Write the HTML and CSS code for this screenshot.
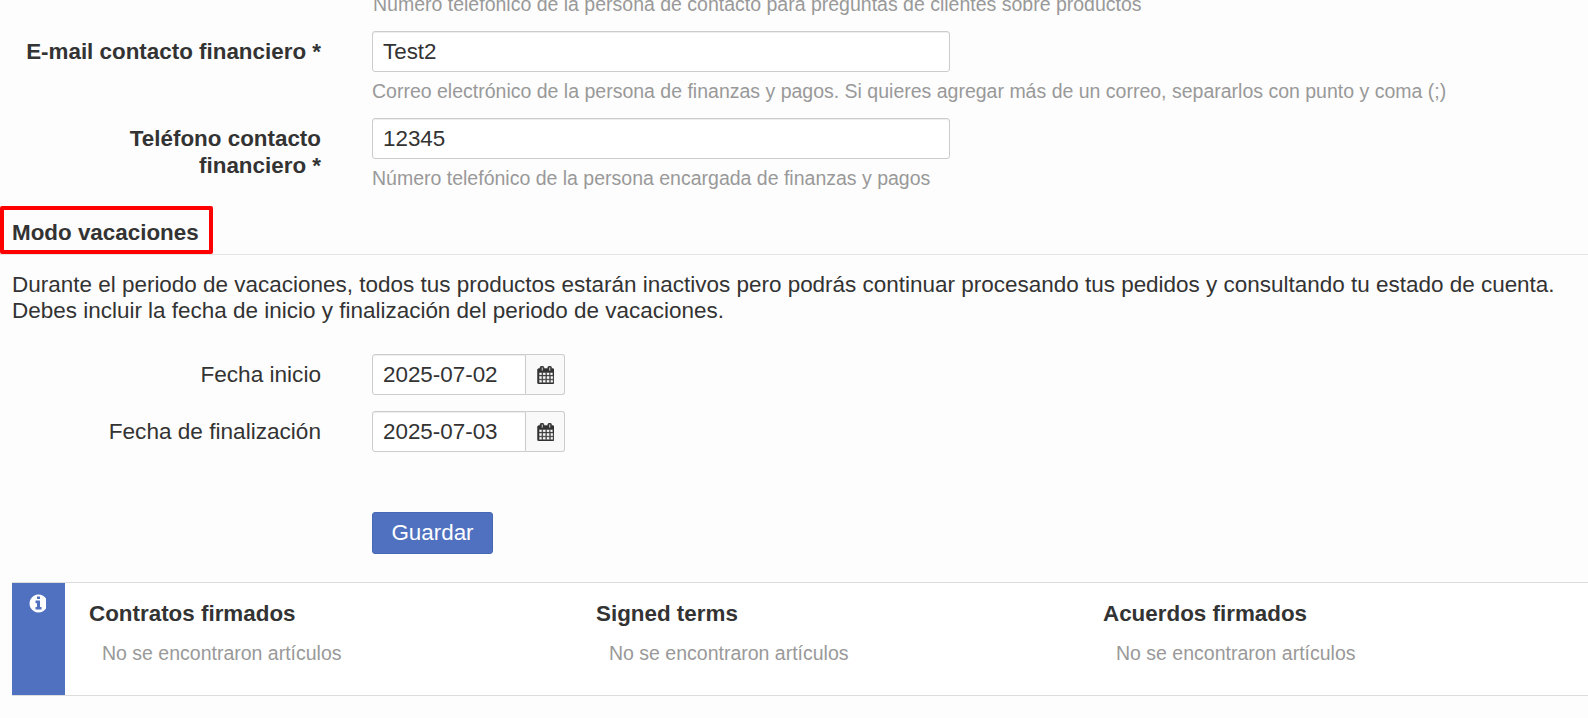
FILE: index.html
```html
<!DOCTYPE html>
<html lang="es">
  <head>
    <meta charset="UTF-8" />
    <title>Modo vacaciones</title>
    <link rel="stylesheet" href="styles.css">
  </head>
  <body>
    <form class="page">
      <p class="hint hint-clipped">Número telefónico de la persona de contacto para preguntas de clientes sobre productos</p>

      <div class="form-row">
        <label class="label-strong" for="email">E-mail contacto financiero *</label>
        <div class="field">
          <input class="text-input" type="text" id="email" value="Test2" />
          <p class="hint">Correo electrónico de la persona de finanzas y pagos. Si quieres agregar más de un correo, separarlos con punto y coma (;)</p>
        </div>
      </div>

      <div class="form-row">
        <label class="label-strong" for="phone">Teléfono contacto financiero *</label>
        <div class="field">
          <input class="text-input" type="text" id="phone" value="12345" />
          <p class="hint">Número telefónico de la persona encargada de finanzas y pagos</p>
        </div>
      </div>

      <div class="section-head">
        <h4 class="section-title">Modo vacaciones</h4>
      </div>
      <p class="section-text">Durante el periodo de vacaciones, todos tus productos estarán inactivos pero podrás continuar procesando tus pedidos y consultando tu estado de cuenta. Debes incluir la fecha de inicio y finalización del periodo de vacaciones.</p>

      <div class="form-row date-row">
        <label for="start">Fecha inicio</label>
        <div class="date-group">
          <input class="date-input" type="text" id="start" value="2025-07-02" />
          <span class="addon">
            <svg class="icon-calendar" viewBox="0 0 1664 1792"><path d="M192 1664h288v-288h-288v288zm352 0h320v-288h-320v288zm-352-352h288v-320h-288v320zm352 0h320v-320h-320v320zm-352-384h288v-288h-288v288zm736 736h320v-288h-320v288zm-384-736h320v-288h-320v288zm768 736h288v-288h-288v288zm-384-352h320v-320h-320v320zm-352-864v-288q0-13-9.5-22.5t-22.5-9.5h-64q-13 0-22.5 9.5t-9.5 22.5v288q0 13 9.5 22.5t22.5 9.5h64q13 0 22.5-9.5t9.5-22.5zm736 864h288v-320h-288v320zm-384-384h320v-288h-320v288zm352 0h288v-288h-288v288zm32-480v-288q0-13-9.5-22.5t-22.5-9.5h-64q-13 0-22.5 9.5t-9.5 22.5v288q0 13 9.5 22.5t22.5 9.5h64q13 0 22.5-9.5t9.5-22.5zm384-64v1280q0 52-38 90t-90 38h-1408q-52 0-90-38t-38-90v-1280q0-52 38-90t90-38h128v-96q0-66 47-113t113-47h64q66 0 113 47t47 113v96h384v-96q0-66 47-113t113-47h64q66 0 113 47t47 113v96h128q52 0 90 38t38 90z"/></svg>
          </span>
        </div>
      </div>

      <div class="form-row date-row">
        <label for="end">Fecha de finalización</label>
        <div class="date-group">
          <input class="date-input" type="text" id="end" value="2025-07-03" />
          <span class="addon">
            <svg class="icon-calendar" viewBox="0 0 1664 1792"><path d="M192 1664h288v-288h-288v288zm352 0h320v-288h-320v288zm-352-352h288v-320h-288v320zm352 0h320v-320h-320v320zm-352-384h288v-288h-288v288zm736 736h320v-288h-320v288zm-384-736h320v-288h-320v288zm768 736h288v-288h-288v288zm-384-352h320v-320h-320v320zm-352-864v-288q0-13-9.5-22.5t-22.5-9.5h-64q-13 0-22.5 9.5t-9.5 22.5v288q0 13 9.5 22.5t22.5 9.5h64q13 0 22.5-9.5t9.5-22.5zm736 864h288v-320h-288v320zm-384-384h320v-288h-320v288zm352 0h288v-288h-288v288zm32-480v-288q0-13-9.5-22.5t-22.5-9.5h-64q-13 0-22.5 9.5t-9.5 22.5v288q0 13 9.5 22.5t22.5 9.5h64q13 0 22.5-9.5t9.5-22.5zm384-64v1280q0 52-38 90t-90 38h-1408q-52 0-90-38t-38-90v-1280q0-52 38-90t90-38h128v-96q0-66 47-113t113-47h64q66 0 113 47t47 113v96h384v-96q0-66 47-113t113-47h64q66 0 113 47t47 113v96h128q52 0 90 38t38 90z"/></svg>
          </span>
        </div>
      </div>

      <div class="form-row submit-row">
        <span></span>
        <button class="btn-save" type="button">Guardar</button>
      </div>

      <section class="info-box">
        <div class="info-icon">
          <svg class="icon-info" viewBox="0 0 1536 1792"><path d="M1152 1376v-160q0-14-9-23t-23-9h-96v-512q0-14-9-23t-23-9h-320q-14 0-23 9t-9 23v160q0 14 9 23t23 9h96v320h-96q-14 0-23 9t-9 23v160q0 14 9 23t23 9h448q14 0 23-9t9-23zm-128-896v-160q0-14-9-23t-23-9h-192q-14 0-23 9t-9 23v160q0 14 9 23t23 9h192q14 0 23-9t9-23zm640 416q0 209-103 385.5t-279.5 279.5-385.5 103-385.5-103-279.5-279.5-103-385.5 103-385.5 279.5-279.5 385.5-103 385.5 103 279.5 279.5 103 385.5z"/></svg>
        </div>
        <div class="info-cols">
          <div class="info-col">
            <h5>Contratos firmados</h5>
            <p>No se encontraron artículos</p>
          </div>
          <div class="info-col">
            <h5>Signed terms</h5>
            <p>No se encontraron artículos</p>
          </div>
          <div class="info-col">
            <h5>Acuerdos firmados</h5>
            <p>No se encontraron artículos</p>
          </div>
        </div>
      </section>
    </form>
  </body>
</html>
```

FILE: styles.css
```css
html,
body {
  height: 100%;
}
body {
  margin: 0;
  overflow: hidden;
  background: #fdfdfd;
  color: #333;
  font-family: "Liberation Sans", Arial, sans-serif;
  font-size: 22.4px;
  line-height: 26px;
}
.page {
  margin-top: -9px;
}
p {
  margin: 0;
}
.hint {
  color: #999;
  font-size: 19.5px;
  line-height: 26px;
  margin-top: 6px;
}
.hint-clipped {
  margin: 0 0 14px 373px;
}
.form-row {
  display: grid;
  grid-template-columns: 321px 1fr;
  column-gap: 51px;
  margin-bottom: 14px;
}
.form-row label {
  text-align: right;
  padding: 7px 0 0 22px;
  line-height: 27px;
}
.label-strong {
  font-weight: 700;
}
.text-input,
.date-input {
  box-sizing: border-box;
  height: 41px;
  padding: 0 10px;
  border: 1px solid #ccc;
  border-radius: 3px;
  background: #fff;
  box-shadow: inset 0 1px 1px rgba(0, 0, 0, 0.075);
  color: #333;
  font-family: inherit;
  font-size: 22.4px;
}
.text-input {
  display: block;
  width: 578px;
}
.section-head {
  margin-top: 15px;
  border-bottom: 1px solid #e5e5e5;
}
.section-title {
  box-sizing: border-box;
  width: 213px;
  height: 48px;
  margin: 0;
  padding: 10px 8px 0;
  border: 4px solid #f00;
  border-radius: 2px;
  font-size: 22.4px;
  line-height: 26px;
}
.section-text {
  margin: 17px 12px 30px;
  font-size: 22.47px;
}
.date-row {
  margin-bottom: 16px;
}
.date-row label {
  font-size: 22.6px;
}
.date-group {
  display: flex;
  width: 193px;
}
.date-input {
  width: 154px;
  border-radius: 3px 0 0 3px;
}
.addon {
  flex: 1;
  display: flex;
  align-items: center;
  justify-content: center;
  border: 1px solid #ccc;
  border-left: 0;
  border-radius: 0 3px 3px 0;
  background: #f9f9f9;
}
.icon-calendar {
  width: 17px;
  height: 18px;
  fill: #333;
  stroke: #333;
  stroke-width: 50;
}
.submit-row {
  margin: 60px 0 28px;
}
.btn-save {
  width: 121px;
  height: 42px;
  border: 1px solid #4568b5;
  border-radius: 3px;
  background: #4f71c0;
  color: #fff;
  font-family: inherit;
  font-size: 22.4px;
}
.info-box {
  display: flex;
  margin-left: 12px;
  background: #fff;
  border-top: 1px solid #ddd;
  border-bottom: 1px solid #ddd;
}
.info-icon {
  width: 53px;
  flex-shrink: 0;
  height: 112px;
  background: #4f71c0;
  text-align: center;
}
.icon-info {
  display: block;
  width: 18px;
  height: 21px;
  margin: 10px 0 0 16px;
  fill: #fff;
}
.info-cols {
  display: grid;
  grid-template-columns: repeat(3, 507px);
  padding: 18px 0 0 24px;
}
.info-col h5 {
  margin: 0;
  font-size: 22.4px;
  line-height: 26px;
}
.info-col p {
  margin: 13px 0 0 13px;
  color: #999;
  font-size: 19.5px;
  line-height: 26px;
}
```
